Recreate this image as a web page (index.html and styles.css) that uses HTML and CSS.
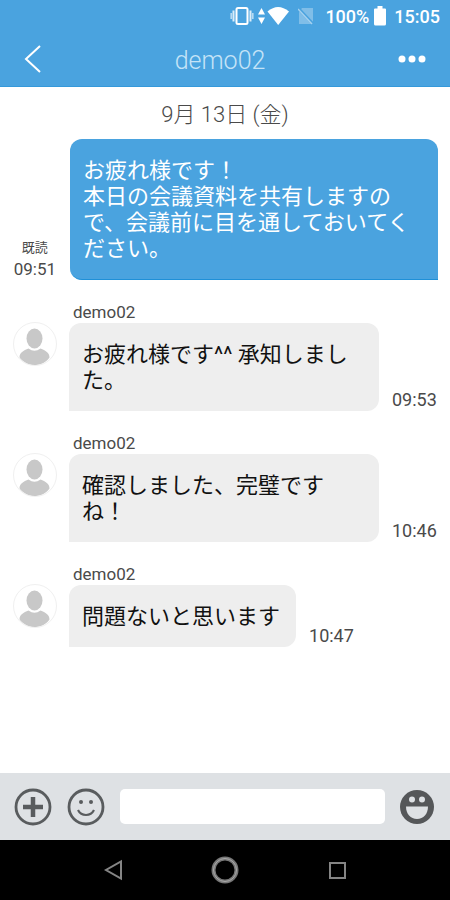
FILE: index.html
```html
<!DOCTYPE html>
<html lang="ja">
<head>
<meta charset="utf-8">
<meta name="viewport" content="width=device-width, initial-scale=1">
<title>demo02</title>
<link rel="stylesheet" href="styles.css">
</head>
<body>
<svg class="defs" aria-hidden="true">
  <symbol id="person" viewBox="0 0 42 42">
    <ellipse cx="20.500" cy="15.500" rx="8" ry="10"/>
    <path d="M5.500 34.500C5.500 29.500 9.500 27.500 14.500 25.500Q20.500 30 26.500 25.500C31.500 27.500 35.500 29.500 35.500 34.500C31.500 40 26.500 42 20.500 42S9.500 40 5.500 34.500Z"/>
  </symbol>
</svg>
<div class="screen">
  <header class="top">
    <div class="status">
      <svg width="24" height="20" viewBox="0 0 24 20" fill="none" stroke="#fff"><rect x="6.500" y="2" width="11" height="16" rx="1.500" stroke-width="2"/><path d="M3.500 4.500v11M20.500 4.500v11" stroke-width="2" opacity=".8"/><path d="M1.200 7v6M22.800 7v6" stroke-width="1.600" opacity=".6"/></svg>
      <svg class="wifi" width="32" height="20" viewBox="0 0 32 20" fill="#fff"><path d="M0 8.500L3.500 2 7 8.500ZM0 11.500h7L3.500 18Z"/><path d="M9.500 5.500Q20 -3.500 31 5.500L20.200 19Z"/></svg>
      <svg class="sim" width="16" height="18" viewBox="0 0 16 18"><path d="M4 1h11v16H1V5Z" fill="#fff" opacity=".3"/><path d="M1 2l14 15" stroke="#4aa3df" stroke-width="3"/><path d="M0 2l14 15" stroke="#fff" stroke-width="1.500" opacity=".5"/></svg>
      <span class="percent">100%</span>
      <svg class="battery" width="12" height="20" viewBox="0 0 12 20" fill="#fff"><path d="M3.500 0h5v2.500H11q1 0 1 1V18q0 1.500-1.500 1.500h-9Q0 19.500 0 18V3.500q0-1 1-1h2.500Z"/></svg>
      <span class="clock">15:05</span>
    </div>
    <div class="bar">
      <button class="icon" aria-label="戻る"><svg width="18" height="28" viewBox="0 0 18 28" fill="none" stroke="#fff" stroke-width="2"><path d="M16 1L2 14 16 27"/></svg></button>
      <h1>demo02</h1>
      <button class="icon more" aria-label="メニュー"><svg width="28" height="8" viewBox="0 0 28 8" fill="#fff"><circle cx="4" cy="4" r="3.500"/><circle cx="14" cy="4" r="3.500"/><circle cx="24" cy="4" r="3.500"/></svg></button>
    </div>
  </header>
  <main class="chat">
    <p class="date">9月 13日 (金)</p>
    <article class="sent">
      <div class="meta"><span class="read">既読</span><time>09:51</time></div>
      <p class="bubble">お疲れ様です！<br>本日の会議資料を共有しますので、会議前に目を通しておいてください。</p>
    </article>
    <article class="received">
      <svg class="avatar"><use href="#person"/></svg>
      <div class="body"><span class="name">demo02</span><p class="bubble">お疲れ様です^^ 承知しました。</p></div>
      <time>09:53</time>
    </article>
    <article class="received">
      <svg class="avatar"><use href="#person"/></svg>
      <div class="body"><span class="name">demo02</span><p class="bubble">確認しました、完璧ですね！</p></div>
      <time>10:46</time>
    </article>
    <article class="received">
      <svg class="avatar"><use href="#person"/></svg>
      <div class="body"><span class="name">demo02</span><p class="bubble">問題ないと思います</p></div>
      <time>10:47</time>
    </article>
  </main>
  <form class="compose">
    <button type="button" class="icon" aria-label="追加"><svg width="38" height="38" viewBox="0 0 38 38" fill="none" stroke="#595c5e"><circle cx="19" cy="19" r="17" stroke-width="2.800"/><path d="M19 9v20M9 19h20" stroke-width="4.500"/></svg></button>
    <button type="button" class="icon" aria-label="絵文字"><svg width="38" height="38" viewBox="0 0 38 38" fill="none" stroke="#595c5e"><circle cx="19" cy="19" r="17" stroke-width="2.800"/><path d="M11 22Q13.500 27 19 27T27 22" stroke-width="2.200"/><g fill="#595c5e" stroke="none"><circle cx="14" cy="14" r="2"/><circle cx="24" cy="14" r="2"/></g></svg></button>
    <input type="text" aria-label="メッセージ">
    <button type="button" class="icon" aria-label="スタンプ"><svg width="34" height="36" viewBox="0 0 34 36"><circle cx="17" cy="18" r="17" fill="#555759"/><g fill="#dee1e4"><circle cx="12" cy="10.500" r="3"/><circle cx="22" cy="10.500" r="3"/><path d="M6 17.500H28C28 25 23.500 30 17 30S6 25 6 17.500Z"/></g></svg></button>
  </form>
  <nav class="system">
    <button class="icon" aria-label="戻る"><svg width="28" height="28" viewBox="0 0 28 28" fill="none" stroke="#858585" stroke-width="2"><path d="M22 5.500V22.500L7 14Z"/></svg></button>
    <button class="icon" aria-label="ホーム"><svg width="28" height="28" viewBox="0 0 28 28" fill="none" stroke="#777"><circle cx="14" cy="14" r="11.500" stroke-width="4"/><circle cx="14" cy="14" r="11.500" stroke="#aaa" stroke-width="1"/></svg></button>
    <button class="icon" aria-label="履歴"><svg width="28" height="28" viewBox="0 0 28 28" fill="none" stroke="#858585" stroke-width="2"><rect x="7" y="7" width="15" height="15"/></svg></button>
  </nav>
</div>
</body>
</html>
```
FILE: styles.css
```css
* { box-sizing: border-box; }
body {
  margin: 0;
  background: #fff;
  font-family: Roboto, "Noto Sans CJK JP", sans-serif;
}
p, h1 { margin: 0; }
svg { display: block; flex: none; }
.defs { position: absolute; width: 0; height: 0; }
.screen { min-height: 100vh; display: flex; flex-direction: column; }
.icon {
  display: flex;
  padding: 0;
  border: 0;
  background: none;
}
.top { background: #4aa3df; color: #fff; }
.status {
  display: flex;
  align-items: center;
  justify-content: flex-end;
  height: 32px;
  padding-right: 10px;
  font-size: 18px;
  font-weight: 500;
}
.wifi { margin-left: 4px; }
.sim { margin-left: 8px; }
.percent { margin-left: 11px; }
.battery { margin-left: 5px; }
.clock { margin-left: 8px; }
.bar {
  display: grid;
  grid-template-columns: 1fr auto 1fr;
  align-items: center;
  height: 55px;
  padding: 0 24px;
  border-bottom: 1px solid #3599da;
}
.bar h1 {
  padding: 2px 10px 0 0;
  font-size: 25px;
  font-weight: 300;
  color: #c5e3f7;
}
.more { justify-self: end; }
.chat {
  flex: 1;
  padding: 13px 12px 40px;
  color: #4a4a4a;
}
.date {
  margin-bottom: 9px;
  line-height: 30px;
  font-size: 22px;
  font-weight: 300;
  text-align: center;
}
.sent { display: flex; justify-content: flex-end; align-items: flex-end; gap: 14px; }
.meta { display: flex; flex-direction: column; align-items: center; }
.read { font-size: 13px; line-height: 20px; }
time { font-size: 17px; line-height: 22px; }
.bubble {
  padding: 19px 13px 17px;
  font-size: 22px;
  line-height: 26px;
  border-radius: 12px;
}
.sent .bubble {
  flex: 0 1 368px;
  background: #4aa3df;
  color: #fff;
  border-bottom: 1px solid #1f90d8;
  border-bottom-right-radius: 0;
}
.received { display: flex; align-items: flex-end; margin-top: 21px; }
.avatar {
  align-self: flex-start;
  width: 44px;
  height: 44px;
  margin: 21px 12px 0 1px;
  border: 1px solid #f0f0f0;
  border-radius: 50%;
  fill: #c8c8c8;
}
.body { max-width: 310px; }
.name {
  display: block;
  padding-left: 4px;
  font-size: 17px;
  line-height: 22px;
}
.received .bubble {
  padding-right: 16px;
  background: #eee;
  color: #111;
  border-bottom-left-radius: 0;
}
.received time { margin-left: 13px; font-size: 18px; }
.compose {
  display: flex;
  align-items: center;
  height: 67px;
  gap: 15px;
  padding: 0 16px 0 14px;
  background: #dee1e4;
}
.compose input {
  flex: 1;
  min-width: 0;
  height: 35px;
  padding: 0 10px;
  border: 0;
  border-radius: 5px;
  background: #fff;
  font: inherit;
  font-size: 17px;
}
.system {
  display: flex;
  align-items: center;
  justify-content: center;
  gap: 84px;
  height: 60px;
  background: #000;
}
```
